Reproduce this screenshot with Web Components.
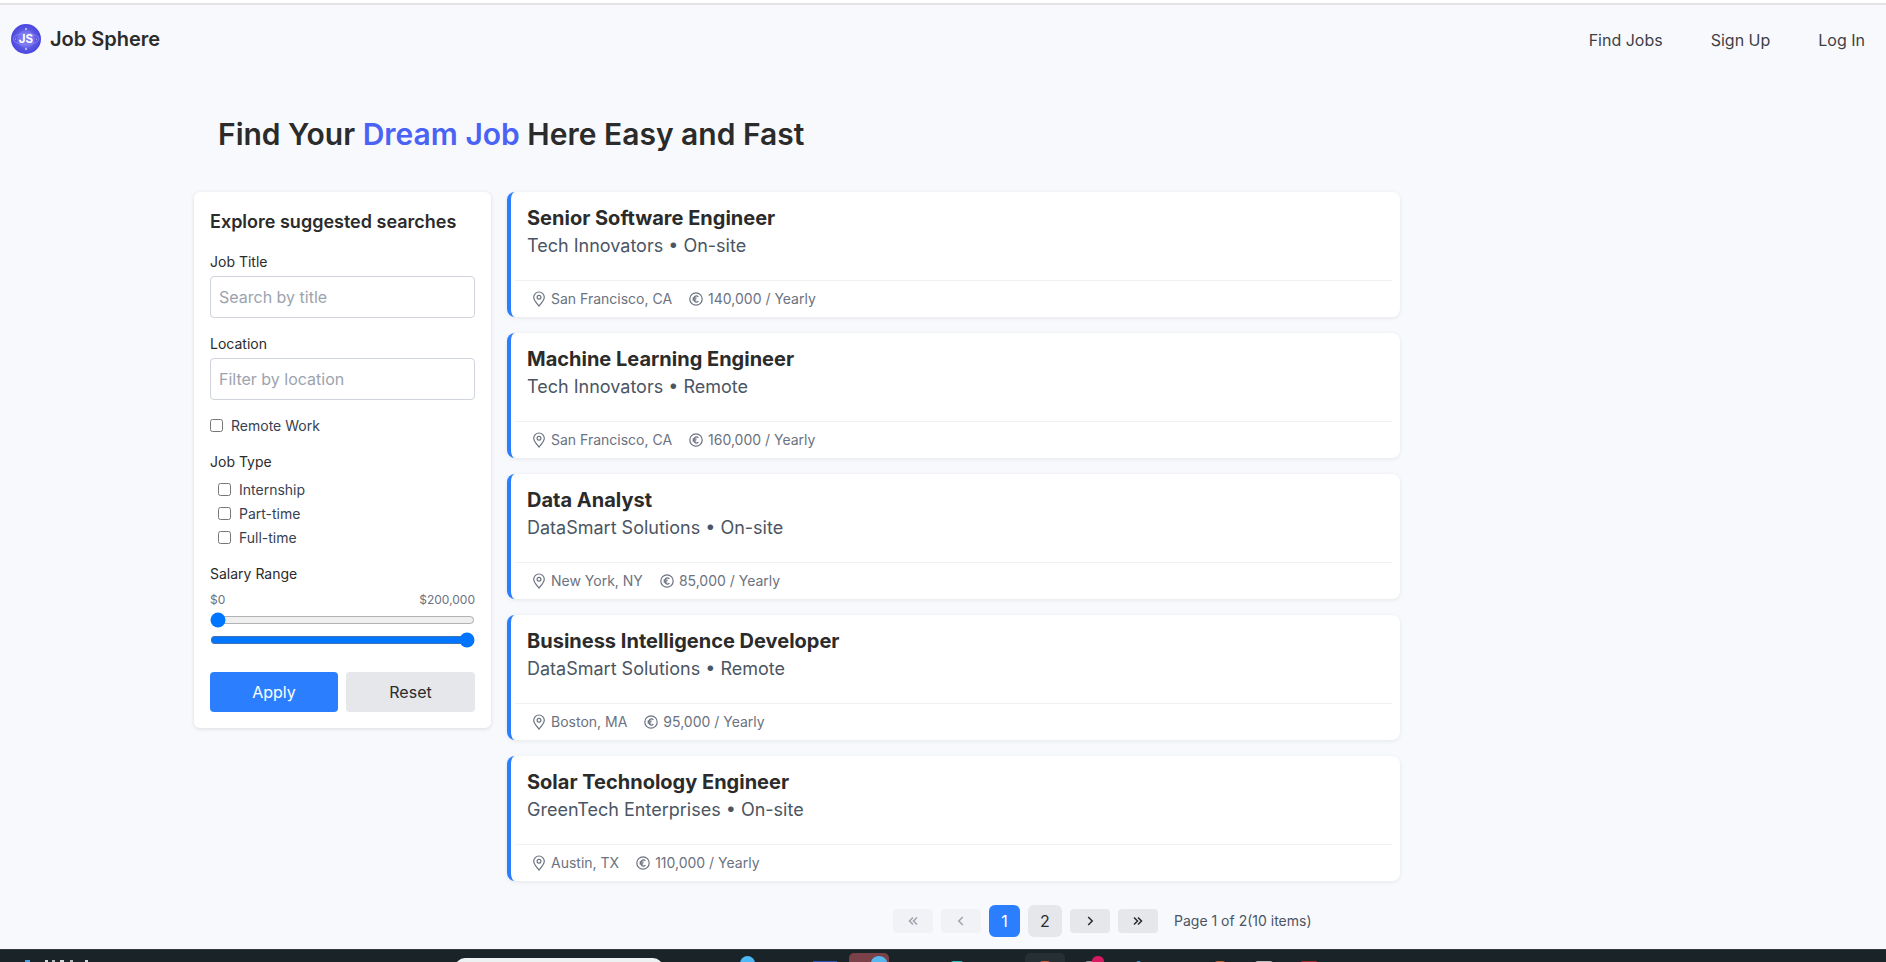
<!DOCTYPE html>
<html lang="en">
<head>
<meta charset="utf-8">
<title>Job Sphere</title>
<style>
  html, body { margin: 0; height: 100%; }
  body {
    font-family: 'Inter', 'Liberation Sans', sans-serif;
    color: #2b2b2b;
    background: #f8f9fd;
    overflow: hidden;
  }
</style>
</head>
<body>
<app-shell>
  <site-header></site-header>
  <page-title>Find Your <em>Dream Job</em> Here Easy and Fast</page-title>
  <div slot="filters"><filter-panel></filter-panel></div>
  <job-card title="Senior Software Engineer" company="Tech Innovators" mode="On-site" place="San Francisco, CA" pay="140,000"></job-card>
  <job-card title="Machine Learning Engineer" company="Tech Innovators" mode="Remote" place="San Francisco, CA" pay="160,000"></job-card>
  <job-card title="Data Analyst" company="DataSmart Solutions" mode="On-site" place="New York, NY" pay="85,000"></job-card>
  <job-card title="Business Intelligence Developer" company="DataSmart Solutions" mode="Remote" place="Boston, MA" pay="95,000"></job-card>
  <job-card title="Solar Technology Engineer" company="GreenTech Enterprises" mode="On-site" place="Austin, TX" pay="110,000"></job-card>
  <job-pager slot="pager"></job-pager>
  <task-bar slot="taskbar"></task-bar>
</app-shell>

<script>
class AppShell extends HTMLElement {
  constructor() {
    super();
    this.attachShadow({ mode: 'open' });
    this.shadowRoot.innerHTML = `
      <style>
        :host {
          display: flex;
          flex-direction: column;
          height: 962px;
          overflow: hidden;
        }
        .top {
          height: 3px;
          background: #fff;
          border-bottom: 2px solid #e3e3e3;
          flex: none;
        }
        .content { flex: 1; min-height: 0; }
        .layout {
          display: grid;
          grid-template-columns: 297px 893px;
          gap: 16px;
          padding-left: 194px;
          margin-top: 0;
        }
        .list {
          display: flex;
          flex-direction: column;
          gap: 16px;
        }
      </style>
      <div class="top"></div>
      <div class="content">
        <slot name="header"></slot>
        <slot name="title"></slot>
        <div class="layout">
          <slot name="filters"></slot>
          <div class="list">
            <slot></slot>
            <slot name="pager"></slot>
          </div>
        </div>
      </div>
      <slot name="taskbar"></slot>
    `;
  }
  connectedCallback() {
    this.querySelector('site-header').slot = 'header';
    this.querySelector('page-title').slot = 'title';
  }
}

class SiteHeader extends HTMLElement {
  constructor() {
    super();
    this.attachShadow({ mode: 'open' });
    this.shadowRoot.innerHTML = `
      <style>
        :host {
          display: flex;
          align-items: center;
          justify-content: space-between;
          height: 67px;
          padding: 0 21px 0 11px;
        }
        .brand { display: flex; align-items: center; gap: 9px; margin-top: 1px; }
        .brand svg { display: block; }
        .name { font-size: 20px; font-weight: 600; color: #2b2b2b; }
        nav { display: flex; gap: 48px; font-size: 16px; color: #3f3f46; margin-top: 2px; }
      </style>
      <div class="brand">
        <svg width="30" height="30" viewBox="0 0 30 30">
          <defs>
            <radialGradient id="g" cx="50%" cy="50%" r="50%">
              <stop offset="0" stop-color="#7a78f2"/>
              <stop offset="1" stop-color="#4a46dd"/>
            </radialGradient>
          </defs>
          <circle cx="15" cy="15" r="15" fill="url(#g)"/>
          <ellipse cx="15" cy="15" rx="13" ry="5.5" fill="none" stroke="#9a98f7" stroke-width=".6"/>
          <circle cx="15" cy="15" r="9" fill="#8a87f4" opacity=".45"/>
          <circle cx="15" cy="5" r=".9" fill="#e4e4ff"/>
          <circle cx="15" cy="25" r=".9" fill="#e4e4ff"/>
          <circle cx="4.5" cy="15" r=".6" fill="#c9c8fb"/>
          <circle cx="25.5" cy="15" r=".6" fill="#c9c8fb"/>
          <text x="15" y="19.2" text-anchor="middle" font-family="Inter, sans-serif" font-size="11.5" font-weight="700" fill="#fff">JS</text>
        </svg>
        <span class="name">Job Sphere</span>
      </div>
      <nav><span>Find Jobs</span><span>Sign Up</span><span>Log In</span></nav>
    `;
  }
}

class PageTitle extends HTMLElement {
  constructor() {
    super();
    this.attachShadow({ mode: 'open' });
    this.shadowRoot.innerHTML = `
      <style>
        :host {
          display: block;
          padding: 45px 0 40px 218px;
          font-size: 30px;
          line-height: 35px;
          font-weight: 600;
          color: #2b2b2b;
        }
        ::slotted(em) { font-style: normal; color: #4a63f5; }
      </style>
      <slot></slot>
    `;
  }
}

class FilterPanel extends HTMLElement {
  constructor() {
    super();
    this.attachShadow({ mode: 'open' });
    this.shadowRoot.innerHTML = `
      <style>
        :host {
          display: block;
          box-sizing: border-box;
          width: 297px;
          height: 536px;
          padding: 17px 16px 16px;
          background: #fff;
          border-radius: 6px;
          box-shadow: 0 1px 4px rgba(0,0,0,.12);
          font-size: 14px;
          color: #2b2b2b;
        }
        h3 { margin: 0 0 18px; font-size: 18px; line-height: 26px; font-weight: 600; }
        label.head { display: block; font-size: 14px; line-height: 17px; margin-bottom: 6px; color: #2b2b2b; }
        input[type=text] {
          display: block;
          box-sizing: border-box;
          width: 100%;
          height: 42px;
          padding: 0 8px;
          margin-bottom: 17px;
          border: 1px solid #cfd3dc;
          border-radius: 4px;
          font: 16px 'Inter', sans-serif;
          background: #fff;
        }
        input::placeholder { color: #9ca3af; }
        .check {
          display: flex;
          align-items: center;
          gap: 8px;
          height: 20px;
          color: #374151;
          font-size: 14px;
        }
        .check input { width: 13px; height: 13px; margin: 0; flex: none; }
        .types { padding-left: 8px; margin-bottom: 18px; }
        .remote { margin: -2px 0 18px; height: 20px; }
        .ends {
          display: flex;
          justify-content: space-between;
          font-size: 12px;
          line-height: 15px;
          color: #6b7280;
          margin-bottom: 5px;
        }
        input[type=range] { display: block; width: 100%; margin: 0 0 4px; height: 16px; }
        .actions {
          display: grid;
          grid-template-columns: 128px 129px;
          gap: 8px;
          margin-top: 24px;
        }
        button {
          height: 40px;
          border: 0;
          border-radius: 4px;
          font: 400 16px 'Inter', sans-serif;
        }
        .apply { background: #2b7fff; color: #fff; }
        .reset { background: #e5e7eb; color: #2b2b2b; }
      </style>
      <h3>Explore suggested searches</h3>
      <label class="head">Job Title</label>
      <input type="text" placeholder="Search by title">
      <label class="head">Location</label>
      <input type="text" placeholder="Filter by location">
      <label class="check remote"><input type="checkbox">Remote Work</label>
      <label class="head" style="margin-bottom:9px">Job Type</label>
      <div class="types">
        <label class="check" style="margin-bottom:4px"><input type="checkbox">Internship</label>
        <label class="check" style="margin-bottom:4px"><input type="checkbox">Part-time</label>
        <label class="check"><input type="checkbox">Full-time</label>
      </div>
      <label class="head" style="margin-bottom:10px">Salary Range</label>
      <div class="ends"><span>$0</span><span>$200,000</span></div>
      <input type="range" min="0" max="200000" value="0">
      <input type="range" min="0" max="200000" value="200000">
      <div class="actions">
        <button class="apply">Apply</button>
        <button class="reset">Reset</button>
      </div>
    `;
  }
}

class JobCard extends HTMLElement {
  constructor() {
    super();
    this.attachShadow({ mode: 'open' });
    this.shadowRoot.innerHTML = `
      <style>
        :host {
          display: block;
          box-sizing: border-box;
          height: 125px;
          background: #fff;
          border-left: 4px solid #2b7fff;
          border-radius: 8px;
          box-shadow: 0 1px 4px rgba(0,0,0,.08);
        }
        .body { height: 88px; box-sizing: border-box; padding: 12px 16px 0; }
        h2 { margin: 0 0 2px; font-size: 20px; line-height: 28px; font-weight: 700; color: #2b2b2b; }
        .sub { font-size: 18px; line-height: 24px; color: #4b5563; }
        .foot {
          display: flex;
          align-items: center;
          gap: 17px;
          box-sizing: border-box;
          height: 37px;
          margin: 0 8px 0 4px;
          padding: 0 17px 1px;
          border-top: 1px solid #f1f2f4;
          font-size: 14px;
          color: #6b7280;
        }
        .meta { display: flex; align-items: center; gap: 5px; }
        svg { display: block; flex: none; }
      </style>
      <div class="body">
        <h2 id="title"></h2>
        <div class="sub" id="sub"></div>
      </div>
      <div class="foot">
        <span class="meta">
          <svg width="14" height="16" viewBox="0 0 14 16" fill="none" stroke="#6b7280" stroke-width="1.2">
            <path d="M7 15 C4.5 12 1.7 9.3 1.7 6.3 A5.3 5.3 0 0 1 12.3 6.3 C12.3 9.3 9.5 12 7 15 Z"/>
            <circle cx="7" cy="6.2" r="1.9"/>
          </svg>
          <span id="place"></span>
        </span>
        <span class="meta">
          <svg width="14" height="14" viewBox="0 0 14 14" fill="none" stroke="#6b7280" stroke-width="1.2">
            <circle cx="7" cy="7" r="6.2"/>
            <path d="M9.4 4.8 A2.9 2.9 0 1 0 9.4 9.2 M3.6 6.2 H7.6 M3.6 7.8 H7.2"/>
          </svg>
          <span id="pay"></span>
        </span>
      </div>
    `;
  }

  static get observedAttributes() {
    return ['title', 'company', 'mode', 'place', 'pay'];
  }

  attributeChangedCallback() {
    const root = this.shadowRoot;
    root.getElementById('title').textContent = this.getAttribute('title');
    root.getElementById('sub').textContent = `${this.getAttribute('company')} • ${this.getAttribute('mode')}`;
    root.getElementById('place').textContent = this.getAttribute('place');
    root.getElementById('pay').textContent = `${this.getAttribute('pay')} / Yearly`;
  }
}

class JobPager extends HTMLElement {
  constructor() {
    super();
    this.attachShadow({ mode: 'open' });
    const arrow = d => `<svg width="12" height="12" viewBox="0 0 12 12" fill="none" stroke="currentColor" stroke-width="1.5"><path d="${d}"/></svg>`;
    this.shadowRoot.innerHTML = `
      <style>
        :host {
          display: flex;
          align-items: center;
          gap: 8px;
          padding-left: 386px;
          margin-top: 8px;
          height: 32px;
        }
        .arrow {
          display: flex;
          align-items: center;
          justify-content: center;
          width: 40px;
          height: 24px;
          border-radius: 4px;
          background: #e5e7eb;
          color: #2b2b2b;
        }
        .off { background: #f1f2f5; color: #9ca3af; }
        .num {
          display: flex;
          align-items: center;
          justify-content: center;
          height: 32px;
          border-radius: 6px;
          font-size: 16px;
        }
        .on { width: 31px; background: #2b7fff; color: #fff; }
        .idle { width: 34px; background: #e5e7eb; color: #2b2b2b; }
        .info { margin: 0 0 2px 8px; font-size: 14px; color: #4b5563; }
      </style>
      <span class="arrow off">${arrow('M6 2.5 L2.5 6 L6 9.5 M10 2.5 L6.5 6 L10 9.5')}</span>
      <span class="arrow off">${arrow('M7.8 2 L3.8 6 L7.8 10')}</span>
      <span class="num on">1</span>
      <span class="num idle">2</span>
      <span class="arrow">${arrow('M4.2 2 L8.2 6 L4.2 10')}</span>
      <span class="arrow">${arrow('M2 2.5 L5.5 6 L2 9.5 M6 2.5 L9.5 6 L6 9.5')}</span>
      <span class="info">Page 1 of 2(10 items)</span>
    `;
  }
}

class TaskBar extends HTMLElement {
  constructor() {
    super();
    this.attachShadow({ mode: 'open' });
    const items = [
      [25, 960, 5, 2, '#4a9fe0', '0'],
      [45, 960, 3, 2, '#d5d8d9', '0'],
      [52, 960, 3, 2, '#b8bcbe', '0'],
      [60, 960, 4, 2, '#d5d8d9', '0'],
      [70, 960, 3, 2, '#b8bcbe', '0'],
      [85, 960, 3, 2, '#d5d8d9', '0'],
      [455, 958, 208, 20, '#eef1f1', '10px 10px 0 0'],
      [740, 956, 15, 15, '#4cb8f5', '50%'],
      [813, 961, 24, 6, '#2d55b5', '0'],
      [849, 953, 40, 14, '#7a4148', '5px 5px 0 0'],
      [871, 956, 16, 14, '#56b8ee', '50%'],
      [950, 961, 14, 4, '#2fc1c9', '6px 6px 0 0'],
      [1025, 953, 40, 14, '#262f33', '5px 5px 0 0'],
      [1039, 961, 12, 4, '#d2583a', '6px 6px 0 0'],
      [1085, 961, 10, 4, '#8d9194', '3px 3px 0 0'],
      [1092, 956, 12, 10, '#d81b60', '50%'],
      [1136, 961, 5, 3, '#3a9fe0', '3px 3px 0 0'],
      [1214, 961, 12, 4, '#c8642c', '6px 6px 0 0'],
      [1255, 961, 18, 4, '#b9bdbf', '3px 3px 0 0'],
      [1300, 961, 18, 3, '#a52a2a', '3px 3px 0 0']
    ];
    const icons = items.map(([x, y, w, h, bg, r]) =>
      `<i style="left:${x}px;top:${y - 950}px;width:${w}px;height:${h}px;background:${bg};border-radius:${r}"></i>`
    ).join('');
    this.shadowRoot.innerHTML = `
      <style>
        :host {
          display: block;
          position: relative;
          flex: none;
          height: 13px;
          background: #1a2428;
          border-top: 1px solid #33393c;
          box-sizing: border-box;
          overflow: hidden;
        }
        i { position: absolute; display: block; }
      </style>
      ${icons}
    `;
  }
}

customElements.define('app-shell', AppShell);
customElements.define('site-header', SiteHeader);
customElements.define('page-title', PageTitle);
customElements.define('filter-panel', FilterPanel);
customElements.define('job-card', JobCard);
customElements.define('job-pager', JobPager);
customElements.define('task-bar', TaskBar);
</script>
</body>
</html>
